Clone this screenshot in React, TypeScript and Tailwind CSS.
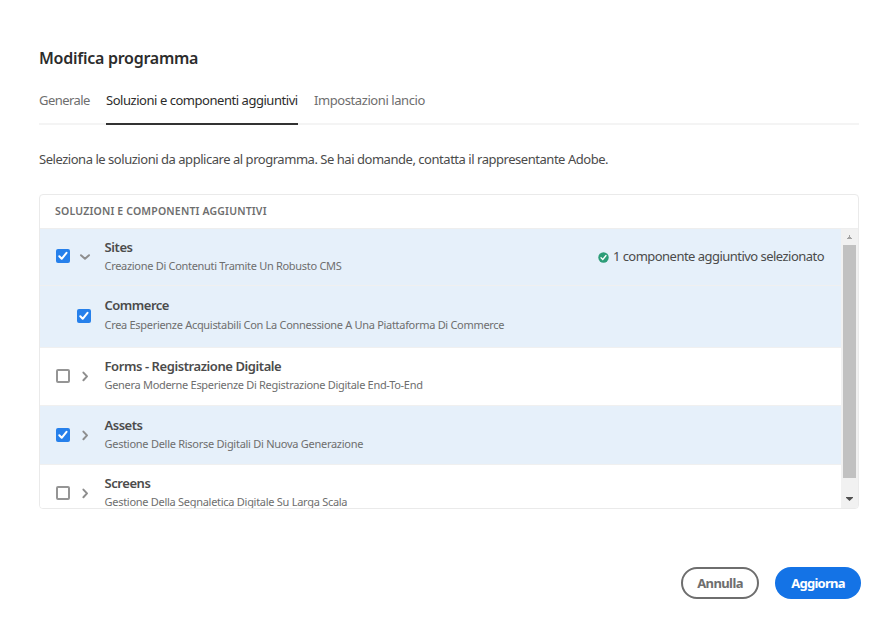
import { ReactNode } from 'react';

function Checkbox({ checked = false }: { checked?: boolean }) {
  return checked ? (
    <span className="flex size-3.5 shrink-0 items-center justify-center rounded-[2px] bg-[#2680eb]">
      <svg width="10" height="10" viewBox="0 0 10 10" fill="none" stroke="#fff" strokeWidth="2" strokeLinecap="round" strokeLinejoin="round">
        <path d="M1.3 5.2 3.7 7.8 8.5 1.8" />
      </svg>
    </span>
  ) : (
    <span className="block size-3.5 shrink-0 rounded-[2px] border-2 border-[#959595] bg-white" />
  );
}

function Chevron({ open = false }: { open?: boolean }) {
  return (
    <svg width="12" height="12" viewBox="0 0 12 12" fill="none" stroke="#8e8e8e" strokeWidth="2" strokeLinecap="round" strokeLinejoin="round">
      <path d={open ? 'M2 5.2 6 8.8 10 5.2' : 'M4.4 2.6 8 6.4 4.4 10.2'} />
    </svg>
  );
}

type RowProps = {
  size: string;
  selected?: boolean;
  nested?: boolean;
  open?: boolean;
  iconClass?: string;
  title: string;
  titleClass: string;
  text: string;
  textClass: string;
  children?: ReactNode;
};

function Row({ size, selected, nested, open, iconClass = '', title, titleClass, text, textClass, children }: RowProps) {
  return (
    <div className={`flex shrink-0 items-center border-b border-[#f0f0f0] pl-4 pr-[17px] ${size} ${selected ? 'bg-[#e6f0fa]' : 'bg-white'}`}>
      <div className={`flex w-[48.5px] shrink-0 items-center ${nested ? 'pl-[21px]' : 'gap-[9px]'} ${iconClass}`}>
        <Checkbox checked={selected} />
        {!nested && <Chevron open={open} />}
      </div>
      <div className="flex-1 whitespace-nowrap">
        <div className={`text-[13px] font-semibold text-[#4b4b4b] ${titleClass}`}>{title}</div>
        <div className={`text-[11px] leading-[19px] text-[#6e6e6e] ${textClass}`}>{text}</div>
      </div>
      {children}
    </div>
  );
}

export default function App() {
  return (
    <div className="h-[635px] w-[894px] overflow-hidden bg-white pl-[39px] pr-[33px] pt-[46px] font-['Noto_Sans',sans-serif]">
      <h1 className="h-6 whitespace-nowrap text-[16px] leading-6 font-semibold tracking-[-0.26px] text-[#2c2c2c]">Modifica programma</h1>
      <nav className="mt-[18px] flex h-[37px] w-[820px] gap-4 whitespace-nowrap border-b-2 border-[#f4f4f4] text-[13px] leading-6 tracking-[-0.46px] text-[#6e6e6e]">
        <span className="w-[51px] tracking-[-0.55px]">Generale</span>
        <span className="h-[37px] w-48 border-b-2 border-[#323232] text-[#2c2c2c]">Soluzioni e componenti aggiuntivi</span>
        <span className="tracking-[-0.42px]">Impostazioni lancio</span>
      </nav>
      <p className="mt-[22px] h-6 whitespace-nowrap text-[13px] leading-6 tracking-[-0.465px] text-[#4b4b4b]">
        Seleziona le soluzioni da applicare al programma. Se hai domande, contatta il rappresentante Adobe.
      </p>
      <section className="mt-[23px] flex h-[315px] w-[820px] flex-col overflow-hidden rounded border border-[#eaeaea]">
        <header className="h-[34px] shrink-0 whitespace-nowrap border-b border-[#eee] pl-[15px] text-[10.5px] leading-[32px] font-semibold tracking-[0.17px] text-[#6e6e6e]">
          SOLUZIONI E COMPONENTI AGGIUNTIVI
        </header>
        <div className="flex min-h-0 flex-1">
          <div className="flex flex-1 flex-col overflow-hidden">
            <Row size="h-[57px] pb-0.5" selected open title="Sites" titleClass="leading-[18px] tracking-[-0.4px]" text="Creazione Di Contenuti Tramite Un Robusto CMS" textClass="tracking-[-0.3px]">
              <div className="flex items-center gap-1 pt-0.5 whitespace-nowrap text-[13px] text-[#4b4b4b]">
                <svg width="11" height="11" viewBox="0 0 11 11" fill="none">
                  <circle cx="5.5" cy="5.5" r="5.2" fill="#2d9d78" />
                  <path d="M3 5.7 4.8 7.5 8 3.5" stroke="#fff" strokeWidth="1.3" strokeLinecap="round" />
                </svg>
                <span className="tracking-[-0.53px]">1 componente aggiuntivo selezionato</span>
              </div>
            </Row>
            <Row size="h-[62px] pb-1" selected nested iconClass="pt-[3px]" title="Commerce" titleClass="leading-[19px] tracking-[-0.5px]" text="Crea Esperienze Acquistabili Con La Connessione A Una Piattaforma Di Commerce" textClass="tracking-[-0.3px]" />
            <Row size="h-[58px] pb-0.5" title="Forms - Registrazione Digitale" titleClass="leading-[18px] tracking-[-0.42px]" text="Genera Moderne Esperienze Di Registrazione Digitale End-To-End" textClass="tracking-[-0.3px]" />
            <Row size="h-[59px] pb-0.5" selected iconClass="pt-px" title="Assets" titleClass="leading-[18px] tracking-[-0.5px]" text="Gestione Delle Risorse Digitali Di Nuova Generazione" textClass="tracking-[-0.27px]" />
            <Row size="h-[58px] pb-0.5" title="Screens" titleClass="leading-[18px] tracking-[-0.43px]" text="Gestione Della Segnaletica Digitale Su Larga Scala" textClass="tracking-[-0.28px]" />
          </div>
          <div className="flex w-[17px] flex-col items-center bg-[#f1f1f1]">
            <div className="flex h-[16px] shrink-0 items-center">
              <svg width="5" height="4" viewBox="0 0 5 4" shapeRendering="crispEdges"><path d="M0 4V3H1V2H2V0H3V2H4V3H5V4Z" fill="#a3a3a3" /></svg>
            </div>
            <div className="h-[233px] w-[13px] shrink-0 bg-[#c1c1c1]" />
            <div className="flex flex-1 items-center pt-3">
              <svg width="7" height="4" viewBox="0 0 7 4"><path d="M0 0V.8L3.5 4 7 .8V0Z" fill="#505050" /></svg>
            </div>
          </div>
        </div>
      </section>
      <footer className="mt-[58px] flex h-8 w-[822px] justify-end gap-4 whitespace-nowrap text-[13px] font-bold">
        <button className="w-[78px] rounded-full border-2 border-[#6e6e6e] pt-px tracking-[-0.6px] text-[#6e6e6e]">Annulla</button>
        <button className="w-[86px] rounded-full bg-[#1473e6] pt-px tracking-[-0.75px] text-white">Aggiorna</button>
      </footer>
    </div>
  );
}
